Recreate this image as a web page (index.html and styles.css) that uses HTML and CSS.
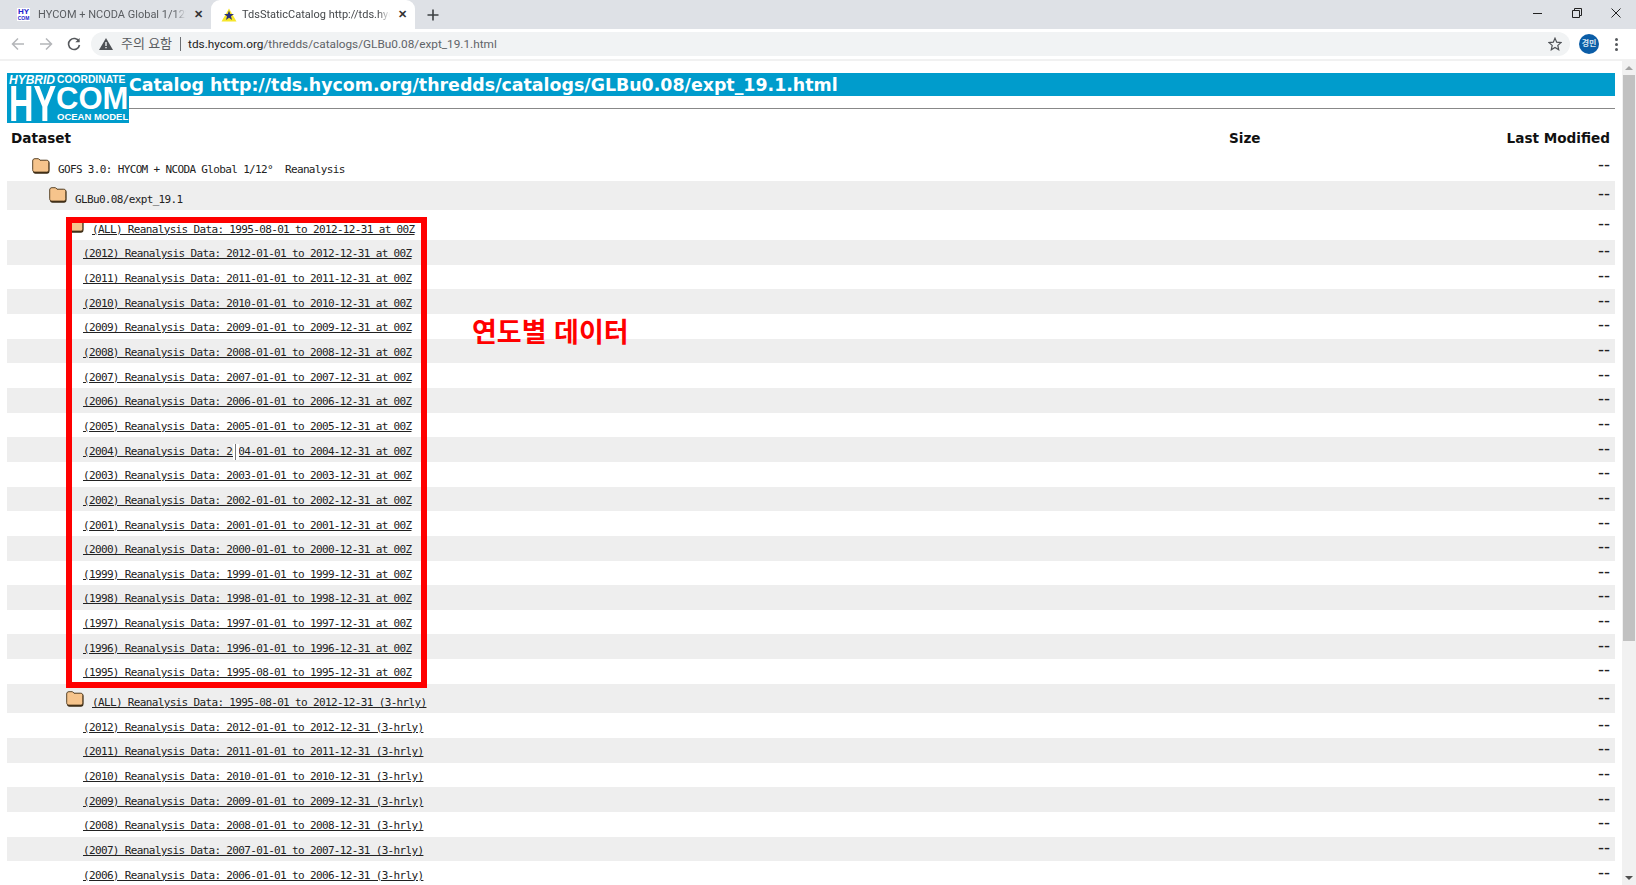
FILE: index.html
```html
<!DOCTYPE html>
<html lang="ko">
<head>
    <meta charset="UTF-8">
    <title>TdsStaticCatalog http://tds.hycom.org/thredds/catalogs/GLBu0.08/expt_19.1.html</title>
    <link rel="stylesheet" href="styles.css">
</head>
<body>
    <svg class="defs" width="0" height="0">
        <symbol id="folder" viewBox="0 0 18 16">
            <path d="M1 3.500C1 2 2 1 3.500 1H7L8.500 2.500H15C16.500 2.500 17.500 3.500 17.500 5V13C17.500 14.800 16.500 15.700 15 15.700H3.500C2 15.700 1 14.800 1 13Z" fill="#3a2a14"/>
            <path d="M.7 3C.7 1.500 1.500.7 3 .7H6.500L8 2.200H14.500C16 2.200 16.800 3 16.800 4.500V11.800C16.800 13.300 16 14.100 14.500 14.100H3C1.500 14.100.7 13.300.7 11.800Z" fill="#f6c48c" stroke="#4a3418" stroke-width=".9"/>
        </symbol>
    </svg>

    <div class="tabstrip">
        <div class="tab">
            <span class="favicon-hy"><b>HY</b><b class="favicon-com">COM</b></span>
            <span class="tab-title">HYCOM + NCODA Global 1/12° Analysis</span>
            <span class="tab-close">✕</span>
        </div>
        <div class="tab tab-active">
            <svg class="favicon" width="16" height="14" viewBox="0 0 16 14">
                <path d="M8 .5L15.500 13.500H.5Z" fill="#f6e62a"/>
                <path d="M8 2.500L9.300 6H13L10 8.300L11 12L8 9.800L5 12L6 8.300L3 6H6.700Z" fill="#28307a"/>
            </svg>
            <span class="tab-title">TdsStaticCatalog http://tds.hycom.org/thredds</span>
            <span class="tab-close">✕</span>
        </div>
        <svg class="new-tab" width="12" height="12" viewBox="0 0 12 12"><path d="M6 .5V11.500M.5 6H11.500" stroke="#3c4043" stroke-width="1.600"/></svg>
        <div class="window-buttons">
            <svg width="12" height="12" viewBox="0 0 12 12"><path d="M1 6.500H10" stroke="#222" stroke-width="1"/></svg>
            <svg width="12" height="12" viewBox="0 0 12 12" fill="none" stroke="#222"><path d="M1.500 3.500H8.500V10.500H1.500Z"/><path d="M3.500 3.500V1.500H10.500V8.500H8.500"/></svg>
            <svg width="12" height="12" viewBox="0 0 12 12"><path d="M1.500 1.500L10.500 10.500M10.500 1.500L1.500 10.500" stroke="#222" stroke-width="1"/></svg>
        </div>
    </div>

    <div class="toolbar">
        <svg class="nav-icon" width="14" height="14" viewBox="0 0 14 14" fill="none" stroke="#b4b6b9" stroke-width="1.500"><path d="M13 7H2M7 1.500L1.500 7L7 12.500"/></svg>
        <svg class="nav-icon" width="14" height="14" viewBox="0 0 14 14" fill="none" stroke="#b4b6b9" stroke-width="1.500"><path d="M1 7H12M7 1.500L12.500 7L7 12.500"/></svg>
        <svg class="nav-icon" width="14" height="14" viewBox="0 0 14 14" fill="none" stroke="#55585c" stroke-width="1.600"><path d="M12 4.500A5.500 5.500 0 1 0 12.500 8"/><path d="M12.600 1V5.300H8.300Z" fill="#55585c" stroke="none"/></svg>
        <div class="omnibox">
            <svg class="warn-icon" width="14" height="12" viewBox="0 0 14 12"><path d="M7 0L14 12H0Z" fill="#4f5256"/><path d="M6.300 4H7.700V8H6.300ZM6.300 9H7.700V10.300H6.300Z" fill="#f1f3f4"/></svg>
            <span class="security">주의 요함</span>
            <span class="url"><span class="url-host">tds.hycom.org</span>/thredds/catalogs/GLBu0.08/expt_19.1.html</span>
            <svg class="star" width="14" height="14" viewBox="0 0 14 14"><path d="M7 1.200L8.700 5.200L13 5.600L9.800 8.400L10.700 12.700L7 10.400L3.300 12.700L4.200 8.400L1 5.600L5.300 5.200Z" fill="none" stroke="#4f5256" stroke-width="1.200"/></svg>
        </div>
        <span class="avatar">경민</span>
        <span class="menu-dots"><i></i><i></i><i></i></span>
    </div>

    <div class="viewport">
        <div class="content">
            <div class="header">
                <div class="logo">
                    <div class="logo-top"><i>HYBRID</i><span>COORDINATE</span></div>
                    <div class="logo-main">
                        <span class="logo-hy">HY</span>
                        <div class="logo-side">
                            <span class="logo-com">COM</span>
                            <span class="logo-ocean">OCEAN MODEL</span>
                        </div>
                    </div>
                </div>
                <div class="header-main">
                    <h1>Catalog http://tds.hycom.org/thredds/catalogs/GLBu0.08/expt_19.1.html</h1>
                    <hr>
                </div>
            </div>

            <div class="table-head">
                <span class="name">Dataset</span>
                <span class="size">Size</span>
                <span class="modified">Last Modified</span>
            </div>

            <div class="row row-folder level-1">
                <svg class="folder"><use href="#folder"/></svg>
                <span class="name">GOFS 3.0: HYCOM + NCODA Global 1/12°&nbsp; Reanalysis</span>
                <span class="size"></span><span class="modified">--</span>
            </div>
            <div class="row row-folder level-2">
                <svg class="folder"><use href="#folder"/></svg>
                <span class="name">GLBu0.08/expt_19.1</span>
                <span class="size"></span><span class="modified">--</span>
            </div>
            <div class="row row-folder level-3">
                <svg class="folder"><use href="#folder"/></svg>
                <span class="name"><a href="#">(ALL) Reanalysis Data: 1995-08-01 to 2012-12-31 at 00Z</a></span>
                <span class="size"></span><span class="modified">--</span>
            </div>
            <div class="row"><span class="name"><a href="#">(2012) Reanalysis Data: 2012-01-01 to 2012-12-31 at 00Z</a></span><span class="size"></span><span class="modified">--</span></div>
            <div class="row"><span class="name"><a href="#">(2011) Reanalysis Data: 2011-01-01 to 2011-12-31 at 00Z</a></span><span class="size"></span><span class="modified">--</span></div>
            <div class="row"><span class="name"><a href="#">(2010) Reanalysis Data: 2010-01-01 to 2010-12-31 at 00Z</a></span><span class="size"></span><span class="modified">--</span></div>
            <div class="row"><span class="name"><a href="#">(2009) Reanalysis Data: 2009-01-01 to 2009-12-31 at 00Z</a></span><span class="size"></span><span class="modified">--</span></div>
            <div class="row"><span class="name"><a href="#">(2008) Reanalysis Data: 2008-01-01 to 2008-12-31 at 00Z</a></span><span class="size"></span><span class="modified">--</span></div>
            <div class="row"><span class="name"><a href="#">(2007) Reanalysis Data: 2007-01-01 to 2007-12-31 at 00Z</a></span><span class="size"></span><span class="modified">--</span></div>
            <div class="row"><span class="name"><a href="#">(2006) Reanalysis Data: 2006-01-01 to 2006-12-31 at 00Z</a></span><span class="size"></span><span class="modified">--</span></div>
            <div class="row"><span class="name"><a href="#">(2005) Reanalysis Data: 2005-01-01 to 2005-12-31 at 00Z</a></span><span class="size"></span><span class="modified">--</span></div>
            <div class="row"><span class="name"><a href="#">(2004) Reanalysis Data: 2004-01-01 to 2004-12-31 at 00Z</a></span><span class="size"></span><span class="modified">--</span></div>
            <div class="row"><span class="name"><a href="#">(2003) Reanalysis Data: 2003-01-01 to 2003-12-31 at 00Z</a></span><span class="size"></span><span class="modified">--</span></div>
            <div class="row"><span class="name"><a href="#">(2002) Reanalysis Data: 2002-01-01 to 2002-12-31 at 00Z</a></span><span class="size"></span><span class="modified">--</span></div>
            <div class="row"><span class="name"><a href="#">(2001) Reanalysis Data: 2001-01-01 to 2001-12-31 at 00Z</a></span><span class="size"></span><span class="modified">--</span></div>
            <div class="row"><span class="name"><a href="#">(2000) Reanalysis Data: 2000-01-01 to 2000-12-31 at 00Z</a></span><span class="size"></span><span class="modified">--</span></div>
            <div class="row"><span class="name"><a href="#">(1999) Reanalysis Data: 1999-01-01 to 1999-12-31 at 00Z</a></span><span class="size"></span><span class="modified">--</span></div>
            <div class="row"><span class="name"><a href="#">(1998) Reanalysis Data: 1998-01-01 to 1998-12-31 at 00Z</a></span><span class="size"></span><span class="modified">--</span></div>
            <div class="row"><span class="name"><a href="#">(1997) Reanalysis Data: 1997-01-01 to 1997-12-31 at 00Z</a></span><span class="size"></span><span class="modified">--</span></div>
            <div class="row"><span class="name"><a href="#">(1996) Reanalysis Data: 1996-01-01 to 1996-12-31 at 00Z</a></span><span class="size"></span><span class="modified">--</span></div>
            <div class="row"><span class="name"><a href="#">(1995) Reanalysis Data: 1995-08-01 to 1995-12-31 at 00Z</a></span><span class="size"></span><span class="modified">--</span></div>
            <div class="row row-folder level-3">
                <svg class="folder"><use href="#folder"/></svg>
                <span class="name"><a href="#">(ALL) Reanalysis Data: 1995-08-01 to 2012-12-31 (3-hrly)</a></span>
                <span class="size"></span><span class="modified">--</span>
            </div>
            <div class="row"><span class="name"><a href="#">(2012) Reanalysis Data: 2012-01-01 to 2012-12-31 (3-hrly)</a></span><span class="size"></span><span class="modified">--</span></div>
            <div class="row"><span class="name"><a href="#">(2011) Reanalysis Data: 2011-01-01 to 2011-12-31 (3-hrly)</a></span><span class="size"></span><span class="modified">--</span></div>
            <div class="row"><span class="name"><a href="#">(2010) Reanalysis Data: 2010-01-01 to 2010-12-31 (3-hrly)</a></span><span class="size"></span><span class="modified">--</span></div>
            <div class="row"><span class="name"><a href="#">(2009) Reanalysis Data: 2009-01-01 to 2009-12-31 (3-hrly)</a></span><span class="size"></span><span class="modified">--</span></div>
            <div class="row"><span class="name"><a href="#">(2008) Reanalysis Data: 2008-01-01 to 2008-12-31 (3-hrly)</a></span><span class="size"></span><span class="modified">--</span></div>
            <div class="row"><span class="name"><a href="#">(2007) Reanalysis Data: 2007-01-01 to 2007-12-31 (3-hrly)</a></span><span class="size"></span><span class="modified">--</span></div>
            <div class="row"><span class="name"><a href="#">(2006) Reanalysis Data: 2006-01-01 to 2006-12-31 (3-hrly)</a></span><span class="size"></span><span class="modified">--</span></div>

            <!-- annotations drawn over the page -->
            <div class="red-box"></div>
            <div class="red-label">연도별 데이터</div>
            <div class="text-cursor"></div>
        </div>
        <div class="scrollbar">
            <span class="scroll-up"></span>
            <div class="scroll-thumb"></div>
            <span class="scroll-down"></span>
        </div>
    </div>
</body>
</html>
```

FILE: styles.css
```css
html, body {
    height: 100%;
}
body {
    margin: 0;
    height: 885px;
    overflow: hidden;
    background: #fff;
    color: #222;
    font-family: "DejaVu Sans Mono", monospace;
}
.defs {
    display: block;
    height: 0;
}

/* browser chrome */
.tabstrip {
    display: flex;
    align-items: center;
    height: 29px;
    background: #dee1e6;
    font-family: Roboto, "Noto Sans CJK KR", sans-serif;
    font-size: 11px;
}
.tab {
    display: flex;
    align-items: center;
    box-sizing: border-box;
    width: 211px;
    height: 29px;
    padding: 0 7px 0 17px;
    color: #5a5d61;
}
.tab-active {
    width: 204px;
    padding-left: 10px;
    background: #fff;
    border-radius: 9px 9px 0 0;
    color: #44474a;
}
.favicon-hy {
    display: flex;
    flex-direction: column;
    align-items: center;
    width: 13px;
    margin-right: 8px;
    background: #fff;
    color: #2222cc;
    font-family: "Liberation Sans", sans-serif;
    font-size: 8px;
    line-height: 7px;
}
.favicon-com {
    font-size: 5px;
    line-height: 6px;
}
.favicon {
    margin-right: 5px;
    flex: none;
}
.tab-title {
    flex: 1;
    overflow: hidden;
    white-space: nowrap;
    margin-right: 6px;
    -webkit-mask-image: linear-gradient(to right, #000 92%, transparent);
    mask-image: linear-gradient(to right, #000 92%, transparent);
}
.tab-close {
    width: 12px;
    color: #333;
    font-size: 11px;
    font-weight: 700;
    text-align: center;
}
.new-tab {
    margin-left: 12px;
}
.window-buttons {
    display: flex;
    gap: 27px;
    margin-left: auto;
    margin-right: 14px;
    margin-top: -4px;
}
.toolbar {
    display: flex;
    align-items: center;
    box-sizing: border-box;
    height: 32px;
    padding: 0 14px 0 11px;
    background: #fff;
    border-bottom: 2px solid #f1f1f1;
    font-family: Roboto, "Noto Sans CJK KR", sans-serif;
}
.nav-icon {
    margin-right: 14px;
    flex: none;
}
.omnibox {
    display: flex;
    align-items: center;
    box-sizing: border-box;
    width: 1479px;
    height: 24px;
    margin-left: -4px;
    padding: 0 8px 0 8px;
    background: #f1f3f4;
    border-radius: 12px;
    font-size: 11.800px;
}
.warn-icon {
    flex: none;
}
.security {
    margin-left: 8px;
    padding-right: 8px;
    border-right: 1px solid #6b6e72;
    color: #5a5d61;
    font-size: 13px;
    line-height: 14px;
}
.url {
    margin-left: 7px;
    color: #5f6368;
}
.url-host {
    color: #222;
}
.star {
    margin-left: auto;
}
.avatar {
    width: 20px;
    height: 20px;
    margin-left: 9px;
    border-radius: 50%;
    background: #0b5da7;
    color: #d8e6f3;
    font-size: 8px;
    font-weight: 700;
    line-height: 20px;
    text-align: center;
}
.menu-dots {
    display: flex;
    flex-direction: column;
    gap: 2px;
    margin-left: 16px;
}
.menu-dots i {
    width: 3px;
    height: 3px;
    border-radius: 50%;
    background: #55585c;
}

/* page */
.viewport {
    display: flex;
    height: 824px;
    overflow: hidden;
}
.content {
    position: relative;
    flex: 1;
    padding: 12px 0 0 7px;
    font-size: 11px;
    letter-spacing: -.65px;
}
.header {
    display: flex;
    height: 52px;
}
.logo {
    box-sizing: border-box;
    width: 122px;
    height: 50px;
    padding-top: 2px;
    flex: none;
    background: #009ccc;
    color: #fff;
    font-family: "Liberation Sans", sans-serif;
    font-weight: 700;
    letter-spacing: 0;
}
.logo-top {
    display: flex;
    gap: 2px;
    padding-left: 2px;
    font-size: 10.300px;
    line-height: 10px;
}
.logo-top i {
    font-size: 12px;
}
.logo-main {
    display: flex;
}
.logo-hy {
    width: 47px;
    margin-left: 2px;
    font-size: 50px;
    line-height: 38px;
    transform: scaleX(.68);
    transform-origin: left;
}
.logo-side {
    display: flex;
    flex-direction: column;
}
.logo-com {
    font-size: 31px;
    line-height: 27px;
}
.logo-ocean {
    font-size: 9.500px;
    line-height: 10px;
    margin-left: 1px;
}
.header-main {
    flex: 1;
}
h1 {
    height: 23px;
    margin: 0;
    background: #009ccc;
    color: #fff;
    font-family: "DejaVu Sans", sans-serif;
    font-size: 17.400px;
    font-weight: 700;
    line-height: 24px;
    letter-spacing: 0;
    white-space: nowrap;
}
hr {
    height: 1px;
    margin: 12px 0 0;
    border: none;
    background: #888;
}
.table-head {
    display: flex;
    align-items: center;
    height: 25px;
    padding-bottom: 1px;
    color: #111;
    font-family: "DejaVu Sans", sans-serif;
    font-size: 13.600px;
    font-weight: 700;
    letter-spacing: 0;
}
.table-head .name {
    padding-left: 4px;
}
.name {
    flex: 1;
    white-space: nowrap;
}
.size {
    width: 261px;
}
.modified {
    width: 125px;
    padding-right: 5px;
    box-sizing: border-box;
    text-align: right;
}
.row {
    display: flex;
    align-items: center;
    height: 24.670px;
    padding-left: 76px;
}
.row:nth-of-type(even) {
    background: #eee;
}
.row .name {
    padding-top: 3px;
}
.row .modified {
    padding-bottom: 2px;
    font-family: "Liberation Sans", sans-serif;
    font-size: 18px;
    letter-spacing: 0;
    line-height: 18px;
}
.row a {
    color: #222;
}
.row-folder {
    height: 29.670px;
}
.row-folder .name {
    padding-top: 8px;
    margin-left: 8px;
}
.level-1 {
    padding-left: 25px;
}
.level-2 {
    padding-left: 42px;
}
.level-3 {
    padding-left: 59px;
}
.folder {
    width: 18px;
    height: 16px;
    flex: none;
}

/* red markup on the screenshot */
.red-box {
    position: absolute;
    left: 66px;
    top: 156px;
    width: 349px;
    height: 459px;
    border: 6px solid #f00;
}
.red-label {
    position: absolute;
    left: 472px;
    top: 252px;
    color: #f00;
    font-family: "Noto Sans CJK KR", sans-serif;
    font-size: 27px;
    font-weight: 700;
    line-height: 36px;
    letter-spacing: 0;
    white-space: nowrap;
}
.text-cursor {
    position: absolute;
    left: 233px;
    top: 383px;
    width: 6px;
    height: 16px;
    background: linear-gradient(to right, #fff 2px, #777 2px, #777 3px, #fff 3px);
}
.scrollbar {
    display: flex;
    flex-direction: column;
    align-items: center;
    box-sizing: border-box;
    width: 14px;
    margin-left: 7px;
    background: #f1f1f1;
}
.scroll-up, .scroll-down {
    width: 0;
    height: 0;
    border-left: 4px solid transparent;
    border-right: 4px solid transparent;
}
.scroll-up {
    margin: 5px 0 5px;
    border-bottom: 4px solid #a3a3a3;
}
.scroll-thumb {
    width: 12px;
    height: 566px;
    background: #c1c1c1;
}
.scroll-down {
    margin-top: auto;
    margin-bottom: 5px;
    border-top: 4px solid #505050;
}
```
